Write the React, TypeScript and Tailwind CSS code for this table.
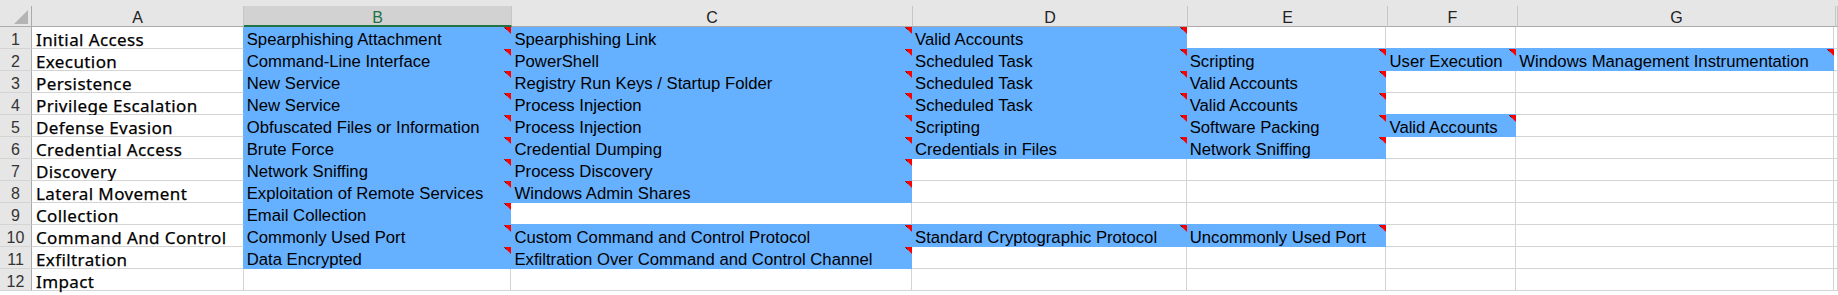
const rows: string[][] = [
  ["Initial Access", "Spearphishing Attachment", "Spearphishing Link", "Valid Accounts"],
  ["Execution", "Command-Line Interface", "PowerShell", "Scheduled Task", "Scripting", "User Execution", "Windows Management Instrumentation"],
  ["Persistence", "New Service", "Registry Run Keys / Startup Folder", "Scheduled Task", "Valid Accounts"],
  ["Privilege Escalation", "New Service", "Process Injection", "Scheduled Task", "Valid Accounts"],
  ["Defense Evasion", "Obfuscated Files or Information", "Process Injection", "Scripting", "Software Packing", "Valid Accounts"],
  ["Credential Access", "Brute Force", "Credential Dumping", "Credentials in Files", "Network Sniffing"],
  ["Discovery", "Network Sniffing", "Process Discovery"],
  ["Lateral Movement", "Exploitation of Remote Services", "Windows Admin Shares"],
  ["Collection", "Email Collection"],
  ["Command And Control", "Commonly Used Port", "Custom Command and Control Protocol", "Standard Cryptographic Protocol", "Uncommonly Used Port"],
  ["Exfiltration", "Data Encrypted", "Exfiltration Over Command and Control Channel"],
  ["Impact"],
]

const widths = ["w-[212px]", "w-[268px]", "w-[401px]", "w-[275px]", "w-[200px]", "w-[130px]", "w-[318px]", "flex-1"]
const letters = ["A", "B", "C", "D", "E", "F", "G", ""]

function isBlue(r: number, c: number) {
  if (r >= rows.length) return false
  return c >= 1 && c <= 6 && !!rows[r][c]
}

function Flag() {
  return (
    <svg className="absolute top-0 right-[-1px]" width="7" height="7" viewBox="0 0 7 7">
      <polygon points="0,0 7,0 7,7" fill="#ff0000" />
      <line x1="0.5" y1="0.5" x2="2.5" y2="2.5" stroke="#3a1010" strokeWidth="1" />
    </svg>
  )
}

function Cell({ r, c }: { r: number; c: number }) {
  const text = rows[r][c] || ""
  const blue = isBlue(r, c)
  const rightBlue = blue || isBlue(r, c + 1)
  const bottomBlue = blue || isBlue(r + 1, c)
  return (
    <div
      className={`${widths[c]} relative h-[22px] border-r border-b box-border whitespace-nowrap ${
        blue ? "bg-[#66b1ff]" : "bg-white"
      } ${rightBlue ? "border-r-[#66b1ff]" : "border-r-[#d4d4d4]"} ${
        bottomBlue ? "border-b-[#66b1ff]" : "border-b-[#d4d4d4]"
      }`}
    >
      {c === 0 ? (
        <div className="pl-[4px] pt-[4px] leading-[18px] text-[17px] tracking-[0.4px] text-black [-webkit-text-stroke:0.25px_black] font-['Noto_Sans',sans-serif]">
          {text}
        </div>
      ) : (
        <div className="pl-[3px] pt-[4px] leading-[18px] text-[16.7px] text-black font-['Liberation_Sans',Arial,sans-serif]">
          {text}
        </div>
      )}
      {blue && <Flag />}
    </div>
  )
}

export default function App() {
  return (
    <div className="w-[1838px] h-[295px] bg-white overflow-hidden select-none">
      <div className="h-[6px] bg-[#e6e6e6]" />
      <div className="flex h-[21px] bg-[#e6e6e6] font-['Liberation_Sans',Arial,sans-serif]">
        <div className="relative w-[32px] border-r border-b border-r-[#ababab] border-b-[#ababab] box-border">
          <svg className="absolute left-[14px] top-[4px]" width="14" height="14" viewBox="0 0 14 14">
            <polygon points="14,0 14,14 0,14" fill="#b4b4b4" />
          </svg>
        </div>
        {letters.map((l, i) => (
          <div
            key={i}
            className={`${widths[i]} box-border border-r text-center ${
              l === "B"
                ? "bg-[#d2d2d2] border-b-2 border-b-[#217346] text-[#217346] border-r-[#c6c6c6]"
                : "border-b border-b-[#ababab] text-[#222] border-r-[#c6c6c6]"
            } pt-[3px] leading-[18px] text-[16px]`}
          >
            {l}
          </div>
        ))}
      </div>
      {rows.map((_, r) => (
        <div key={r} className="flex">
          <div className="w-[32px] h-[22px] bg-[#e6e6e6] border-r border-b border-r-[#ababab] border-b-[#d4d4d4] box-border text-center pt-[4px] leading-[18px] text-[16px] text-[#333] font-['Liberation_Sans',Arial,sans-serif]">
            {r + 1}
          </div>
          {letters.map((_, c) => (
            <Cell key={c} r={r} c={c} />
          ))}
        </div>
      ))}
    </div>
  )
}
